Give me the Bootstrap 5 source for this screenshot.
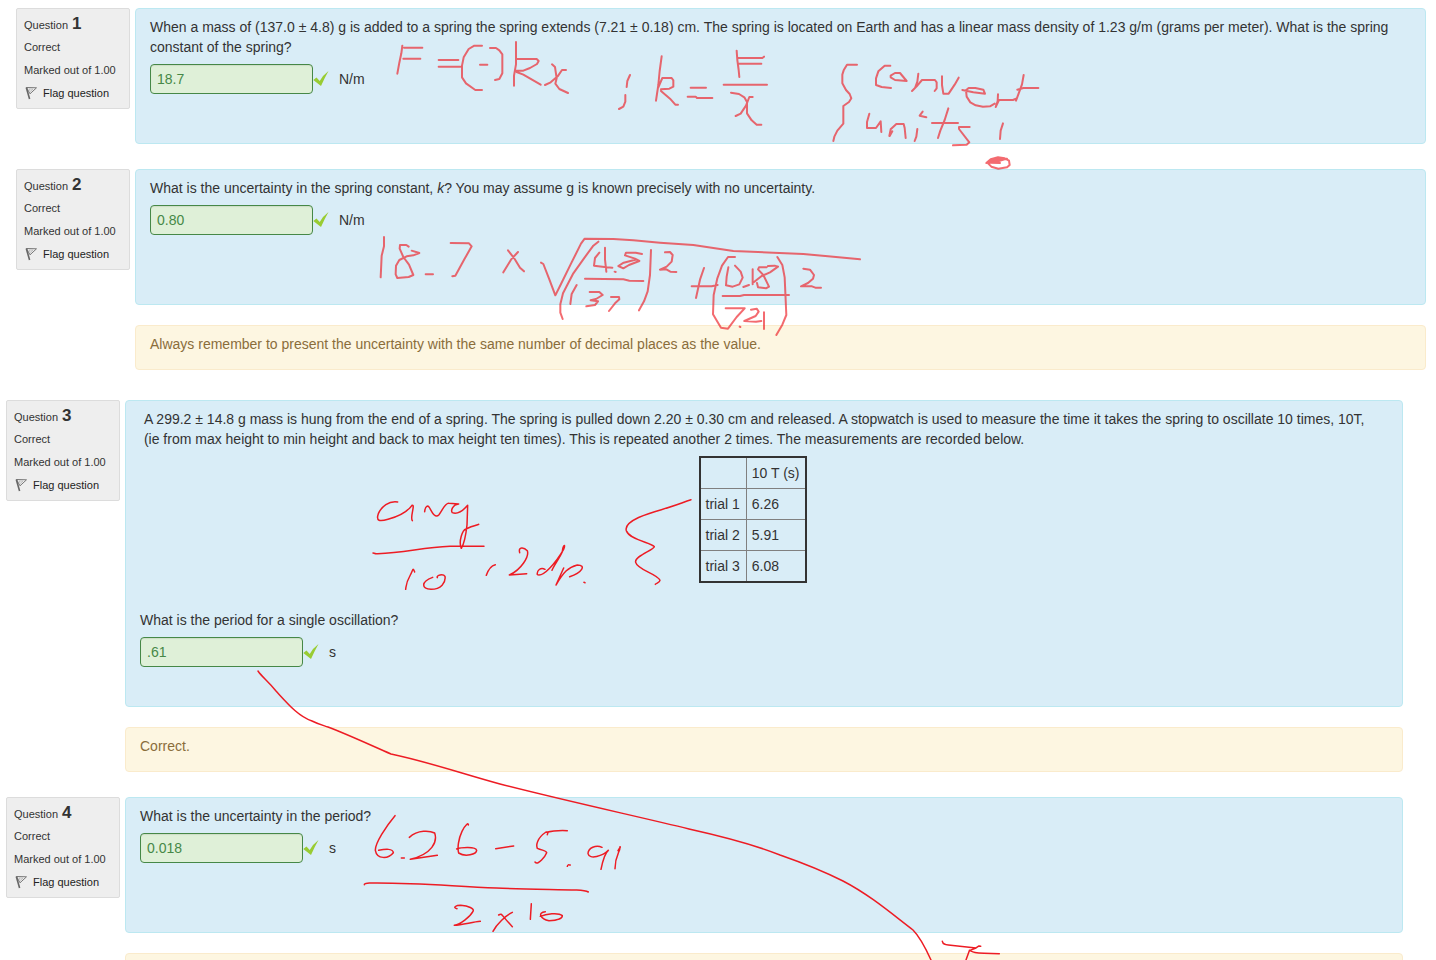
<!DOCTYPE html>
<html lang="en">
<head>
<meta charset="utf-8">
<meta name="viewport" content="width=device-width, initial-scale=1">
<title>Quiz review</title>
<link href="https://cdn.jsdelivr.net/npm/bootstrap@5.3.0/dist/css/bootstrap.min.css" rel="stylesheet">
<style>
body{font-family:"Liberation Sans",Arial,sans-serif;font-size:14px;line-height:20px;color:#333;background:#fff}
.set-a{padding:8px 10px 0 16px}
.set-b{padding:30px 33px 0 6px}
.quiz-row{gap:5px;margin-bottom:25px}
.info{width:114px;padding:5px 7px;background:#eee;border:1px solid #dcdcdc;border-radius:2px;font-size:11px;color:#333}
.info h3{font-size:11px;line-height:20px;margin:0 0 2px;font-weight:400}
.info h3 b{font-size:17px;line-height:20px;margin-left:1px}
.info div{line-height:20px;margin-bottom:3px}
.info a{color:#222;gap:5px;line-height:20px}
.formulation{min-height:136px;padding:8px 14px;background:#d9edf7;border:1px solid #bce8f1;border-radius:4px}
.tall{padding-bottom:39px}
.prompt{margin-bottom:7px}
.answer{width:163px;height:30px;padding:4px 6px;font-size:14px;line-height:20px;color:#468847;background:#dff0d8;border:1px solid #468847;border-radius:4px;box-shadow:inset 0 1px 1px rgba(0,0,0,.08)}
.unit{margin-left:10px}
.feedback{margin:-5px 0 25px 119px;min-height:45px;padding:8px 14px;color:#8a6d3b;background:#fdf6e1;border:1px solid #faebcc;border-radius:4px}
.set-a .feedback{margin-bottom:0}
.trials-wrap{padding-right:22px;margin-bottom:27px}
.trials{border:2px solid #333;border-collapse:collapse}
.trials td,.trials th{border:1px solid #808080;padding:5px 6px 5px 5px;font-weight:400}
.ink{top:0;left:0;pointer-events:none;fill:none;stroke:#ed1c24;stroke-linecap:round;stroke-linejoin:round}
.ink path{vector-effect:non-scaling-stroke}
.ink .marker{stroke-width:2px;stroke-opacity:.65}
.ink .pen{stroke-width:1.5px}
</style>
<script defer src="https://cdn.jsdelivr.net/npm/bootstrap@5.3.0/dist/js/bootstrap.bundle.min.js"></script>
</head>
<body>
<svg class="d-none" aria-hidden="true">
  <symbol id="flag" viewBox="0 0 14 14"><path d="M2.500 1.500 12.500 1.800 6 7.800Z" fill="#eee" stroke="#777" stroke-width="1"/><path d="M5 3 9 3.200 6.300 5.500Z" fill="#eee" stroke="#aaa" stroke-width=".6"/><path d="M2.300 1.500 5.600 13" fill="none" stroke="#666" stroke-width="1.600"/></symbol>
  <symbol id="tick" viewBox="0 0 16 16"><path d="M.300 9 3.500 6.500 6.700 10Q10 4 15.500 0 11.500 7 8 15Z" fill="#9c3"/></symbol>
</svg>
<main class="position-relative overflow-hidden">
  <div class="set-a">
    <section class="quiz-row d-flex align-items-start">
      <div class="info flex-shrink-0"><h3>Question <b>1</b></h3><div>Correct</div><div>Marked out of 1.00</div><a href="#" class="d-flex align-items-center text-decoration-none"><svg width="14" height="14"><use href="#flag"/></svg>Flag question</a></div>
      <div class="formulation flex-grow-1">
        <label for="a1" class="d-block prompt">When a mass of (137.0 ± 4.8) g is added to a spring the spring extends (7.21 ± 0.18) cm. The spring is located on Earth and has a linear mass density of 1.23 g/m (grams per meter). What is the spring constant of the spring?</label>
        <div class="d-flex align-items-center"><input class="answer" id="a1" type="text" value="18.7" readonly><svg width="16" height="16"><use href="#tick"/></svg><span class="unit">N/m</span></div>
      </div>
    </section>
    <section class="quiz-row d-flex align-items-start">
      <div class="info flex-shrink-0"><h3>Question <b>2</b></h3><div>Correct</div><div>Marked out of 1.00</div><a href="#" class="d-flex align-items-center text-decoration-none"><svg width="14" height="14"><use href="#flag"/></svg>Flag question</a></div>
      <div class="formulation flex-grow-1">
        <label for="a2" class="d-block prompt">What is the uncertainty in the spring constant, <i>k</i>? You may assume g is known precisely with no uncertainty.</label>
        <div class="d-flex align-items-center"><input class="answer" id="a2" type="text" value="0.80" readonly><svg width="16" height="16"><use href="#tick"/></svg><span class="unit">N/m</span></div>
      </div>
    </section>
    <div class="feedback">Always remember to present the uncertainty with the same number of decimal places as the value.</div>
  </div>
  <div class="set-b">
    <section class="quiz-row d-flex align-items-start">
      <div class="info flex-shrink-0"><h3>Question <b>3</b></h3><div>Correct</div><div>Marked out of 1.00</div><a href="#" class="d-flex align-items-center text-decoration-none"><svg width="14" height="14"><use href="#flag"/></svg>Flag question</a></div>
      <div class="formulation tall flex-grow-1">
        <div class="prompt">&nbsp;A 299.2 ± 14.8 g mass is hung from the end of a spring. The spring is pulled down 2.20 ± 0.30 cm and released. A stopwatch is used to measure the time it takes the spring to oscillate 10 times, 10T, &nbsp;(ie&nbsp;from max height to min height and back to max height ten times). This is repeated another 2 times. The measurements are recorded below.</div>
        <div class="trials-wrap"><table class="trials mx-auto">
          <tr><td></td><th scope="col">10 T (s)</th></tr>
          <tr><th scope="row">trial 1</th><td>6.26</td></tr>
          <tr><th scope="row">trial 2</th><td>5.91</td></tr>
          <tr><th scope="row">trial 3</th><td>6.08</td></tr>
        </table></div>
        <label for="a3" class="d-block prompt">What is the period for a single oscillation?</label>
        <div class="d-flex align-items-center"><input class="answer" id="a3" type="text" value=".61" readonly><svg width="16" height="16"><use href="#tick"/></svg><span class="unit">s</span></div>
      </div>
    </section>
    <div class="feedback">Correct.</div>
    <section class="quiz-row d-flex align-items-start">
      <div class="info flex-shrink-0"><h3>Question <b>4</b></h3><div>Correct</div><div>Marked out of 1.00</div><a href="#" class="d-flex align-items-center text-decoration-none"><svg width="14" height="14"><use href="#flag"/></svg>Flag question</a></div>
      <div class="formulation flex-grow-1">
        <label for="a4" class="d-block prompt">What is the uncertainty in the period?</label>
        <div class="d-flex align-items-center"><input class="answer" id="a4" type="text" value="0.018" readonly><svg width="16" height="16"><use href="#tick"/></svg><span class="unit">s</span></div>
      </div>
    </section>
    <div class="feedback"></div>
  </div>

  <!-- Handwritten working, drawn over the questions -->
  <svg class="ink position-absolute" width="1436" height="998" aria-hidden="true">
    <g class="marker">
      <g transform="translate(380 30) scale(.33333)">
        <path d="M67 47 64 70 58 98 52 131M72 53H127M70 86H121"/>
        <path d="M176 90H235M176 110H241"/>
        <path d="M306 47H283L266 57 251 82 246 107V142L258 160 286 180H306M300 104H322M330 54H348L358 61 367 73V130L358 147 345 150"/>
        <path d="M408 36V103L402 137V167M410 87H470L476 93 471 102 450 114 430 122 406 122M410 126 430 134 482 164"/>
        <path d="M516 103 525 111 530 145 526 161 538 177 564 189M558 120H546L533 139 512 157 495 165"/>
        <path d="M750 135 742 153 740 171M736 195V215L730 230 717 237"/>
        <path d="M845 79 839 123 835 165 828 212M835 172 847 144H875L880 151V170L868 176 843 178M843 183 870 206 886 224H894M932 173H978M923 200H947L951 204H997"/>
      </g>
      <g transform="translate(700 30) scale(.33333)">
        <path d="M110 62 112 90 116 120 118 141M114 84H187L192 80M116 101H184M71 164H201M93 188 117 192 133 202 141 216V250L155 271 170 284H184M158 201H148L138 227 122 251 107 258"/>
        <path d="M471 104H441L431 121 427 134V160L438 180 449 192 454 205 447 216 430 228V281L412 302 403 320 400 333"/>
        <path d="M571 107H554L535 124 528 145V165L545 171 573 174M572 137 585 129H600L620 153 585 150 572 142ZM655 131 652 155 645 174 636 183 650 169 666 150H705L710 157V175L704 183M726 139V165L730 191H746L764 164 776 143"/>
        <path d="M787 180 820 187 855 191 850 179 826 174H806L798 181 800 200 811 217 827 226 849 230 870 229 884 221M894 193 893 213 887 231 897 210H939L950 205M971 135 966 163 955 193 948 212M952 179 970 174H1015"/>
        <path d="M508 251 501 276V294H528L542 274 544 306M568 318 572 298 589 282H611L614 294 617 324 M569 318 577 304M652 297 649 320 644 333M668 245 659 257 679 262M745 235 734 270 721 302 714 324M696 279H774M809 291H777V297L808 337 800 344 759 346M909 280 902 302 900 327"/>
        <path d="M859 399 872 388 894 382 914 385 927 392 929 405 921 412 895 416 874 410 862 398 888 387 914 388 886 393 870 398 900 399M885 386H921L892 395"/>
      </g>
      <g transform="translate(360 225) scale(.33333)">
        <path d="M72 36V64L65 92 62 157M146 65 139 60H120L119 71 130 96 147 119 160 150 146 156 112 159 107 148 108 122 118 105 140 94 160 91 178 84 155 77M197 148H219M272 54 327 55 335 64 313 103 286 152 277 154M444 76 464 102 480 128 492 139M474 81 453 104 430 142"/>
        <path d="M543 113 550 117 568 163 586 211 603 177 633 116 663 56 674 41 760 42 820 46 900 53 1000 60 1120 78 1240 83 1330 87 1420 95 1500 103"/>
        <path d="M715 50 700 62 672 100 640 145 609 205 601 238V263L608 282M718 83 705 99 702 122 740 127 757 128M735 68V104L739 140M764 140 767 141M846 87 827 83H798L795 91 825 101 838 108 807 120 790 130 775 123 791 113 826 104M675 161 790 163 808 167 850 168M650 180 635 207 631 237M689 201H718L728 210 708 222 692 226 714 229 705 240 679 244M753 216H777L778 223 765 235 747 258M873 75 870 150 863 199 852 229 837 256"/>
      </g>
      <g transform="translate(620 225) scale(.33333)">
        <path d="M135 82 150 81 158 90 155 110 140 125 120 134 139 133 151 140 169 141M252 129 240 164 228 219M215 184H275L293 180M345 96H324L306 122 292 160 281 210 279 268 303 308 324 311 350 276 374 250H317M325 127 320 155 318 181 338 185 358 178 368 158 362 140 345 122M370 186 387 180M398 133V178M474 125 464 122 444 123M474 125 450 142 425 153 402 171M440 127H417L414 133 430 150 447 185 438 190 414 187 411 174"/>
        <path d="M308 213H360L372 210H507M472 96 487 120 494 157 499 270 487 299 469 330M393 254 410 251 416 260 407 273 373 288 408 290 424 288M432 262V312M359 305 361 306M550 131 570 134 582 150 579 161 564 174 543 184 576 184 586 188H603"/>
      </g>
    </g>
    <g class="pen">
      <g transform="translate(350 450) scale(.33333)">
        <path d="M143 156C116 152 95 169 85 191 77 214 89 215 114 208 143 200 173 184 186 166 197 163 179 201 187 212M224 185C226 166 234 165 239 174 248 190 256 206 267 194 279 179 285 158 297 160L326 162C307 164 302 183 307 188 323 194 340 181 353 166L351 225C348 252 342 282 334 295 325 275 337 240 348 237 360 230 375 226 386 223M69 309C78 310 72 312 83 311 166 308 215 293 300 289L402 289M194 366C188 350 189 361 181 375 168 398 169 404 167 418M248 382C212 395 214 416 243 418 273 418 288 398 285 379 280 371 258 375 262 383M436 344C422 347 414 361 409 376M509 308C504 289 522 291 532 302 538 319 514 359 478 375L530 371M585 358C572 350 560 362 562 374 580 382 616 340 641 298 648 280 639 284 637 305 629 324 612 345 606 361M641 354 618 405C641 366 654 352 682 345 710 345 696 369 659 380M702 397 705 398"/>
      </g>
      <g transform="translate(600 450) scale(.33333)"><path d="M273 149C241 160 213 171 184 179 151 188 70 212 79 242 89 270 155 278 163 290 162 300 102 319 107 337 112 360 174 372 180 391 180 398 170 399 166 403"/></g>
      <path d="M258 671C262 677 268 681 276 691 288 704 298 716 312 721 318 724 322 725 328 727 349 735 368 744 391 754 429 762 463 774 500 784C562 800 640 817 689 829 725 837 755 845 780 855 803 863 827 873 843 881 870 895 892 914 913 930 920 937 926 949 931 960"/>
      <g transform="translate(350 800) scale(.33333)">
        <path d="M135 47C108 79 75 130 76 151 81 179 115 177 130 158 129 145 106 147 86 151M154 174 163 174M178 112C204 88 240 92 254 99 263 125 247 162 181 178L262 166M355 75C356 67 347 73 336 94 325 117 322 144 326 159 346 172 379 163 380 151 378 139 332 142 320 147M437 146 491 138M592 104C595 90 605 98 588 96 560 115 558 136 562 145 578 152 589 151 590 158 586 168 565 198 555 186M590 97C601 94 629 91 652 92M652 199C654 191 659 196 661 195M756 142C738 133 714 144 714 161 718 180 759 168 775 151 765 159 758 183 753 208M810 140C812 154 795 165 795 206M804 152 811 141M43 254C43 249 49 250 58 249 197 247 306 259 439 264 507 268 594 268 680 270 702 271 708 272 715 276M321 326C307 322 318 316 332 316 355 318 374 325 369 334 360 351 331 373 313 376 336 375 368 366 391 364M446 345C457 338 452 344 487 380M487 337C468 346 440 372 429 394M544 311 541 358M586 335C561 337 572 358 597 362 617 361 637 356 637 347 625 336 587 342 571 349"/>
      </g>
      <g transform="translate(780 820) scale(.33333)"><path d="M487 364C489 373 495 374 505 375L588 384 597 378 602 379M588 384 568 392 558 420M568 391C581 397 584 399 612 400L658 401"/></g>
    </g>
  </svg>
</main>
</body>
</html>
